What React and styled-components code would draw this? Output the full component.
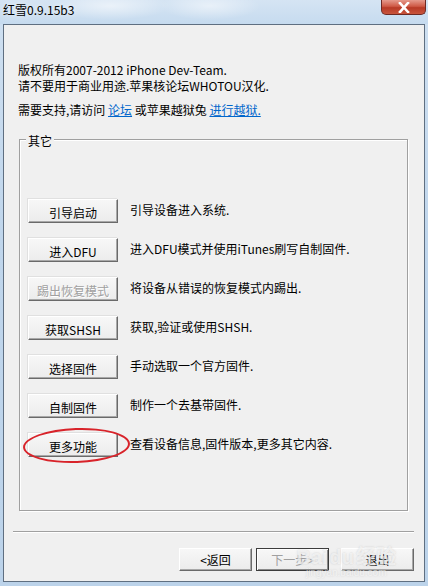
import styled, { createGlobalStyle } from 'styled-components';

const GlobalStyle = createGlobalStyle`
  html, body {
    margin: 0;
    padding: 0;
    width: 428px;
    height: 586px;
    overflow: hidden;
  }
  body {
    font-family: "Noto Sans CJK SC", "DejaVu Sans", sans-serif;
    font-size: 12px;
    color: #000;
  }
`;

const rows = [
  { label: '引导启动', text: '引导设备进入系统.' },
  { label: '进入DFU', text: '进入DFU模式并使用iTunes刷写自制固件.' },
  { label: '踢出恢复模式', text: '将设备从错误的恢复模式内踢出.', disabled: true },
  { label: '获取SHSH', text: '获取,验证或使用SHSH.' },
  { label: '选择固件', text: '手动选取一个官方固件.' },
  { label: '自制固件', text: '制作一个去基带固件.' },
  { label: '更多功能', text: '查看设备信息,固件版本,更多其它内容.', marked: true },
];

const App = () => {
  return (
    <>
      <GlobalStyle />
      <Window>
        <TitleBar>
          <Title>红雪0.9.15b3</Title>
          <CloseBtn>
            <svg width="14" height="11" viewBox="0 0 14 11">
              <path d="M3 1 L11 10 M11 1 L3 10" stroke="#fff" strokeWidth="2.6" strokeLinecap="square" />
            </svg>
          </CloseBtn>
        </TitleBar>
        <Client>
          <Intro>
            <p>版权所有2007-2012 iPhone Dev-Team.</p>
            <p>请不要用于商业用途.苹果核论坛WHOTOU汉化.</p>
            <p className="support">
              需要支持,请访问 <a href="#">论坛</a> 或苹果越狱兔 <a href="#">进行越狱.</a>
            </p>
          </Intro>
          <Group>
            <Legend>其它</Legend>
            {rows.map((r) => (
              <Row key={r.label}>
                <ActionButton $disabled={r.disabled}>
                  {r.label}
                  {r.marked && <Circle />}
                </ActionButton>
                <Desc>{r.text}</Desc>
              </Row>
            ))}
          </Group>
          <Separator />
          <Footer>
            <NavButton>&lt;返回</NavButton>
            <NavButton $disabled $default>下一步&gt;</NavButton>
            <NavButton $gap>退出</NavButton>
          </Footer>
          <Watermark>
            Bai<span className="paw">du</span>经验
            <small>jingyan.baidu.com</small>
          </Watermark>
        </Client>
      </Window>
    </>
  );
};
export default App;

const Window = styled.div`
  width: 428px;
  height: 586px;
  display: flex;
  flex-direction: column;
  background: linear-gradient(180deg, #cfe0f1 0%, #c0d6ec 40%, #bcd3ea 100%);
  padding: 0 3px 4px 3px;
  box-sizing: border-box;
`;

const TitleBar = styled.div`
  height: 24px;
  display: flex;
  align-items: flex-start;
  justify-content: space-between;
  margin: 0 -3px;
  padding: 0 2px 0 3px;
  background:
    radial-gradient(ellipse 60px 14px at 110px 6px, rgba(255, 255, 255, 0.55), transparent),
    radial-gradient(ellipse 50px 14px at 210px 6px, rgba(255, 255, 255, 0.5), transparent),
    linear-gradient(180deg, #d5e4f3 0%, #c6dbef 100%);
`;

const Title = styled.span`
  font-size: 12px;
  line-height: 19px;
  color: #000;
  text-shadow: 0 0 6px rgba(255, 255, 255, 0.9);
`;

const CloseBtn = styled.div`
  width: 45px;
  height: 15px;
  display: flex;
  align-items: center;
  justify-content: center;
  border: 1px solid #6d2a24;
  border-top: none;
  border-radius: 0 0 5px 5px;
  background: linear-gradient(180deg, #e59a8c 0%, #cf5a46 45%, #b83a26 55%, #c8553d 100%);
  box-sizing: border-box;
`;

const Client = styled.div`
  position: relative;
  flex: 1;
  background: #f0f0f0;
  border: 1px solid #5f6f81;
  display: flex;
  flex-direction: column;
  overflow: hidden;
`;

const Intro = styled.div`
  margin: 37px 0 0 14px;
  p {
    margin: 0;
    line-height: 16px;
    white-space: nowrap;
  }
  .support {
    margin-top: 8px;
  }
  a {
    color: #0066cc;
    text-decoration: underline;
  }
`;

const Group = styled.div`
  position: relative;
  margin: 21px 16px 0 15px;
  height: 372px;
  flex-shrink: 0;
  border: 1px solid #a0a0a0;
  box-shadow: inset 1px 1px #fff, 1px 1px #fff;
  padding: 59px 0 0 8px;
  box-sizing: border-box;
  display: flex;
  flex-direction: column;
  gap: 15px;
`;

const Legend = styled.span`
  position: absolute;
  top: -7px;
  left: 6px;
  padding: 0 2px;
  background: #f0f0f0;
  line-height: 15px;
`;

const Row = styled.div`
  display: flex;
  align-items: center;
  gap: 12px;
`;

const ActionButton = styled.div`
  position: relative;
  width: 90px;
  height: 24px;
  flex-shrink: 0;
  box-sizing: border-box;
  display: flex;
  align-items: center;
  justify-content: center;
  background: linear-gradient(180deg, #f7f7f7 0%, #ececec 100%);
  border-style: solid;
  border-width: 1px;
  border-color: #ffffff #6a6a6a #6a6a6a #ffffff;
  box-shadow: inset -1px -1px #a8a8a8, -1px -1px #e0e0e0;
  color: ${(p) => (p.$disabled ? '#a0a0a0' : '#000')};
  text-shadow: ${(p) => (p.$disabled ? '1px 1px #fff' : 'none')};
  padding-top: 2px;
`;

const Circle = styled.span`
  position: absolute;
  left: -6px;
  top: -6px;
  width: 107px;
  height: 35px;
  border: 2px solid #d8232a;
  border-radius: 50%;
  box-sizing: border-box;
  transform: rotate(-2deg);
  pointer-events: none;
`;

const Desc = styled.span`
  white-space: nowrap;
  margin-top: -3px;
`;

const Separator = styled.div`
  margin: 20px 10px 0 9px;
  height: 0;
  border-top: 1px solid #a0a0a0;
  border-bottom: 1px solid #fff;
`;

const Footer = styled.div`
  display: flex;
  justify-content: flex-end;
  gap: 4px;
  margin: 15px 10px 0 0;
`;

const NavButton = styled.div`
  width: 73px;
  height: 23px;
  box-sizing: border-box;
  display: flex;
  align-items: center;
  justify-content: center;
  margin-left: ${(p) => (p.$gap ? '8px' : '0')};
  background: linear-gradient(180deg, #f7f7f7 0%, #ececec 100%);
  border-style: solid;
  border-width: 1px;
  border-color: ${(p) => (p.$default ? '#3c3c3c' : '#ffffff #6a6a6a #6a6a6a #ffffff')};
  box-shadow: ${(p) =>
    p.$default ? 'inset 1px 1px #fff, inset -1px -1px #8a8a8a' : 'inset -1px -1px #a8a8a8'};
  color: ${(p) => (p.$disabled ? '#a0a0a0' : '#000')};
`;

const Watermark = styled.div`
  position: absolute;
  right: 28px;
  bottom: 2px;
  font-family: "Liberation Sans", "Noto Sans CJK SC", sans-serif;
  font-size: 20px;
  font-weight: bold;
  color: rgba(255, 255, 255, 0.6);
  text-shadow: 0 0 2px rgba(140, 140, 140, 0.35);
  line-height: 20px;
  text-align: center;
  pointer-events: none;
  .paw {
    margin: 0 2px;
  }
  small {
    display: block;
    font-size: 10px;
    font-weight: normal;
    line-height: 12px;
  }
`;
